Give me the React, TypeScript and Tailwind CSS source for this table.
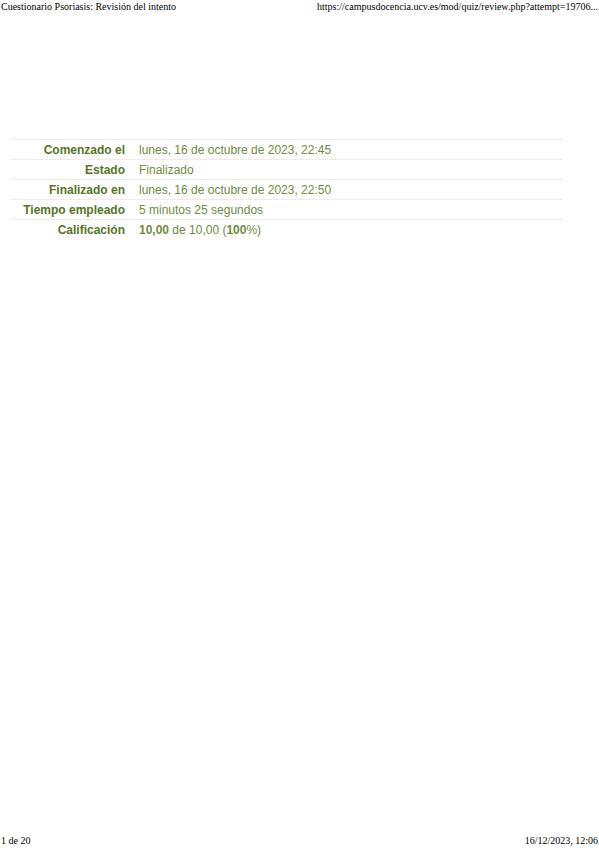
const rows: { label: string; value: React.ReactNode }[] = [
  { label: "Comenzado el", value: "lunes, 16 de octubre de 2023, 22:45" },
  { label: "Estado", value: "Finalizado" },
  { label: "Finalizado en", value: "lunes, 16 de octubre de 2023, 22:50" },
  { label: "Tiempo empleado", value: "5 minutos 25 segundos" },
  {
    label: "Calificación",
    value: (
      <>
        <b>10,00</b> de 10,00 (<b>100</b>%)
      </>
    ),
  },
];

export default function App() {
  return (
    <div className="flex h-[848px] w-[599px] flex-col bg-white text-black">
      <div className="flex justify-between px-[1px] pt-[1px] font-['Liberation_Serif',serif] text-[10px] leading-[12px]">
        <span>Cuestionario Psoriasis: Revisión del intento</span>
        <span>https://campusdocencia.ucv.es/mod/quiz/review.php?attempt=19706...</span>
      </div>

      <div className="ml-[11px] mr-[36px] mt-[126px] font-['Liberation_Sans',Arial,sans-serif] text-[12px]">
        {rows.map((r) => (
          <div
            key={r.label}
            className="flex h-[20px] items-center border-t border-[#ececec]"
          >
            <div className="w-[115px] pr-[1px] text-right font-bold text-[#567526]">
              {r.label}
            </div>
            <div className="pl-[13px] text-[#6f8c40]">{r.value}</div>
          </div>
        ))}
      </div>

      <div className="mt-auto flex justify-between px-[1px] pb-[1px] font-['Liberation_Serif',serif] text-[10px] leading-[12px]">
        <span>1 de 20</span>
        <span>16/12/2023, 12:06</span>
      </div>
    </div>
  );
}
